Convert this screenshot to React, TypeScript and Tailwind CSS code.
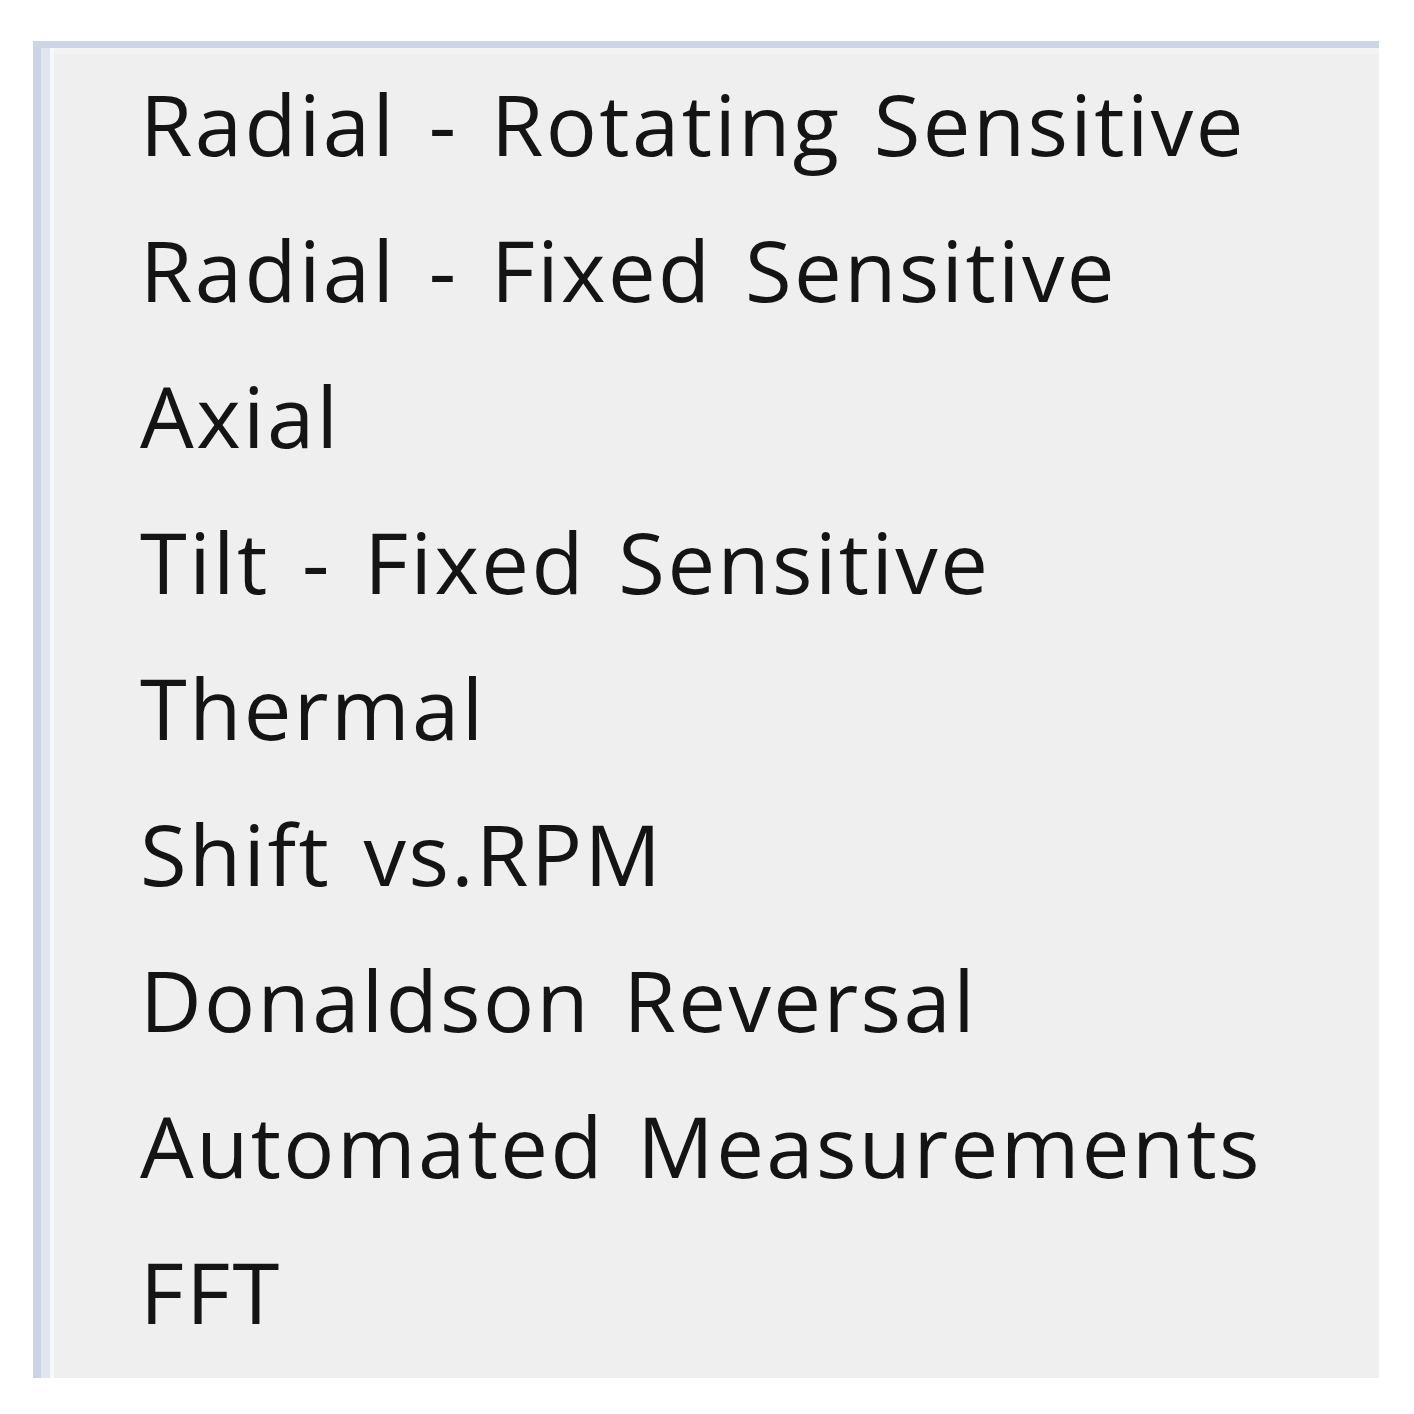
import React from "react";

const items = [
  "Radial - Rotating Sensitive",
  "Radial - Fixed Sensitive",
  "Axial",
  "Tilt - Fixed Sensitive",
  "Thermal",
  "Shift vs.RPM",
  "Donaldson Reversal",
  "Automated Measurements",
  "FFT",
];

export default function App() {
  return (
    <div className="w-[1414px] h-[1414px] bg-white pt-[41px] pl-[33px]">
      <div className="w-[1346px] h-[1337px] flex flex-col bg-[#efefef]">
        <div className="h-[7px] w-full shrink-0 bg-[#cdd6e4]" />
        <div className="flex flex-1">
          <div className="w-[8px] h-full shrink-0 bg-[#cbd5e5]" />
          <div className="w-[9px] h-full shrink-0 bg-[#dfe6f0]" />
          <div className="w-[4px] h-full shrink-0 bg-[#f8f8f8]" />
          <div className="flex-1 flex flex-col">
            <div className="h-[6px] shrink-0 bg-[#f3f3f5]" />
            <ul
              className="flex flex-col pl-[86px] text-[#141414] tracking-[2.4px] [word-spacing:8px]"
              style={{ fontFamily: '"Open Sans", "Noto Sans", sans-serif' }}
            >
              {items.map((t) => (
                <li key={t} className="h-[146px] text-[85px] leading-[138px] whitespace-nowrap">
                  {t}
                </li>
              ))}
            </ul>
          </div>
        </div>
      </div>
    </div>
  );
}
